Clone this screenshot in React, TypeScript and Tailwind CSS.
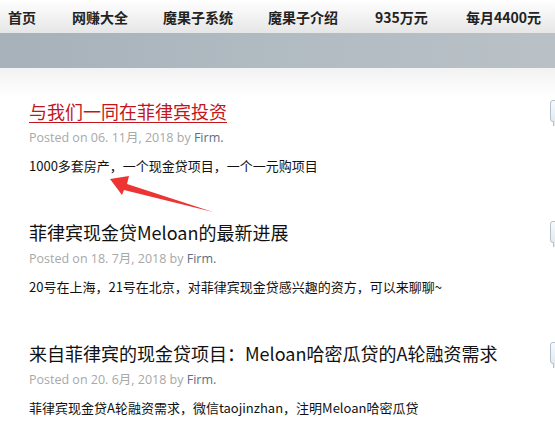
import React from "react";

const posts = [
  {
    title: "与我们一同在菲律宾投资",
    date: "06. 11月, 2018",
    body: "1000多套房产，一个现金贷项目，一个一元购项目",
    link: true,
  },
  {
    title: "菲律宾现金贷Meloan的最新进展",
    date: "18. 7月, 2018",
    body: "20号在上海，21号在北京，对菲律宾现金贷感兴趣的资方，可以来聊聊~",
    link: false,
  },
  {
    title: "来自菲律宾的现金贷项目：Meloan哈密瓜贷的A轮融资需求",
    date: "20. 6月, 2018",
    body: "菲律宾现金贷A轮融资需求，微信taojinzhan，注明Meloan哈密瓜贷",
    link: false,
  },
];

function Bubble() {
  return (
    <div className="absolute right-[-20px] top-[2px] w-[20px] h-[26px]">
      <div className="w-[20px] h-[22px] rounded-[3px] border border-[#b4c0cc] bg-gradient-to-b from-[#f8fafc] to-[#e4eaef]" />
      <div className="absolute left-[3px] top-[21px] w-[5px] h-[5px] border-l border-[#b4c0cc] bg-[#e6ecf0]" />
    </div>
  );
}

export default function App() {
  const cjk = { fontFamily: '"Noto Sans CJK SC", "Noto Sans", sans-serif' };
  return (
    <div className="w-[555px] h-[427px] overflow-hidden bg-white relative" style={cjk}>
      <div className="h-[33px] bg-gradient-to-b from-white to-[#e6e6e6] flex items-center text-[14px] font-bold text-[#222] leading-none">
        <div className="flex items-center">
          <span className="ml-[8px] w-[64px]">首页</span>
          <span className="w-[91px]">网赚大全</span>
          <span className="w-[105px]">魔果子系统</span>
          <span className="w-[107px]">魔果子介绍</span>
          <span className="w-[91px]">935万元</span>
          <span className="whitespace-nowrap">每月4400元</span>
        </div>
      </div>
      <div className="h-[35px] bg-gradient-to-r from-[#a6b1ba] via-[#b1bbc2] to-[#b9c1c6]" />
      <div className="h-[30px] bg-gradient-to-b from-[#f2f2f2] to-white" />
      <div className="pl-[29px] pr-[5px] flex flex-col">
        {posts.map((p, i) => (
          <div key={i} className={`relative ${i === 0 ? "pt-[0px]" : "pt-[44px]"}`}>
            <div className="relative">
              <h2
                className={`text-[18px] leading-[26px] whitespace-nowrap ${
                  p.link ? "text-[#c4151c] underline underline-offset-[3px] decoration-1" : "text-[#111]"
                }`}
              >
                {p.title}
              </h2>
              <Bubble />
            </div>
            <div className="mt-[5px] text-[12.5px] leading-[18px] text-[#a8a8a8]" style={{ fontFamily: '"Open Sans", "Noto Sans CJK SC", sans-serif' }}>
              Posted on {p.date} by <span className="text-[#5b6f86]">Firm.</span>
            </div>
            <p className="mt-[10px] text-[13px] leading-[18px] text-[#111] whitespace-nowrap">{p.body}</p>
          </div>
        ))}
      </div>
      <svg className="absolute left-0 top-0 pointer-events-none" width="555" height="427">
        <path d="M213 212 L127 184 L129 176 L110 179 L122 195 L124 190 Z" fill="#ee3333" />
      </svg>
    </div>
  );
}
